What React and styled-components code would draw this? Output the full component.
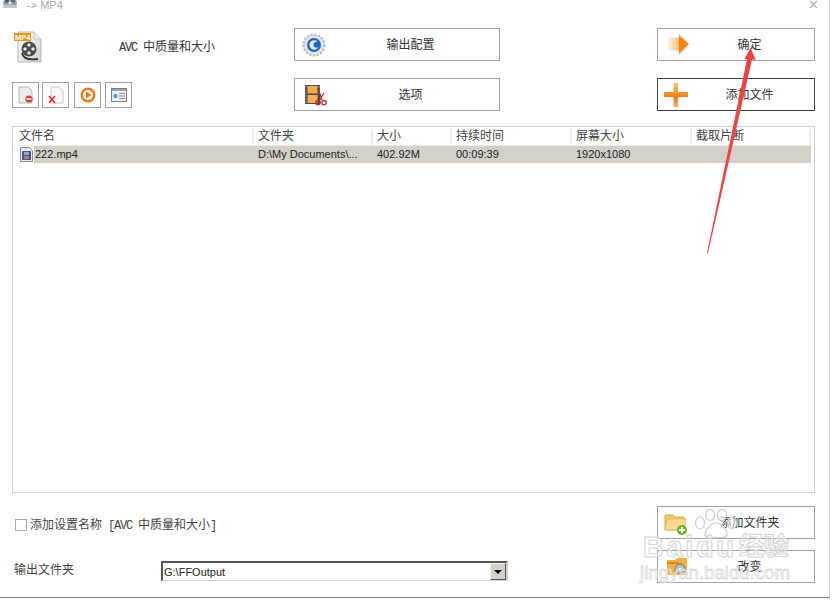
import React from "react"
import styled, { createGlobalStyle } from "styled-components"

const GlobalStyle = createGlobalStyle`
  html, body {
    margin: 0;
    background: #fff;
  }
  body {
    font-family: "Liberation Sans", "Noto Sans CJK SC", sans-serif;
    font-size: 12px;
    color: #333;
  }
`

const columns = [
  { title: "文件名", value: "222.mp4", width: 240 },
  { title: "文件夹", value: "D:\\My Documents\\...", width: 119 },
  { title: "大小", value: "402.92M", width: 79 },
  { title: "持续时间", value: "00:09:39", width: 120 },
  { title: "屏幕大小", value: "1920x1080", width: 120 },
  { title: "截取片断", value: "", width: 119 },
]

const App = () => {
  return (
    <Window>
      <GlobalStyle />
      <TitleBar>
        <TitleIcon />
        <TitleText>-&gt; MP4</TitleText>
        <CloseIcon />
      </TitleBar>

      <TopGrid>
        <Preset>
          <Mp4Icon />
          <PresetName>
            <Mono>AVC </Mono>中质量和大小
          </PresetName>
        </Preset>
        <ActionButton $width={206}>
          <IconSlot>
            <GearIcon />
          </IconSlot>
          <ButtonLabel>输出配置</ButtonLabel>
        </ActionButton>
        <ActionButton>
          <IconSlot $left={10}>
            <ArrowIcon />
          </IconSlot>
          <ButtonLabel>确定</ButtonLabel>
        </ActionButton>
        <ToolRow>
          <ToolButton $after={3}>
            <RemoveIcon />
          </ToolButton>
          <ToolButton $after={5}>
            <DeleteIcon />
          </ToolButton>
          <ToolButton $after={4}>
            <PlayIcon />
          </ToolButton>
          <ToolButton>
            <InfoIcon />
          </ToolButton>
        </ToolRow>
        <ActionButton $width={206}>
          <IconSlot $left={9}>
            <ClipIcon />
          </IconSlot>
          <ButtonLabel>选项</ButtonLabel>
        </ActionButton>
        <ActionButton $active>
          <IconSlot $left={6}>
            <PlusIcon />
          </IconSlot>
          <ButtonLabel>添加文件</ButtonLabel>
        </ActionButton>
      </TopGrid>

      <ListPanel>
        <HeaderRow>
          {columns.map((c, i) => (
            <HeaderCell key={c.title} $width={c.width} $first={i === 0}>
              {c.title}
            </HeaderCell>
          ))}
        </HeaderRow>
        <FileRow>
          {columns.map((c, i) => (
            <FileCell key={c.title} $width={c.width} $first={i === 0}>
              {i === 0 && <FilmIcon />}
              <FileText $first={i === 0}>{c.value}</FileText>
            </FileCell>
          ))}
        </FileRow>
      </ListPanel>

      <BottomRow>
        <BottomLeft>
          <CheckRow>
            <CheckBox />
            <CheckText>
              添加设置名称<Mono> [AVC </Mono>中质量和大小<Mono>]</Mono>
            </CheckText>
          </CheckRow>
          <FolderRow>
            <FolderLabel>输出文件夹</FolderLabel>
            <Combo>
              <ComboText>G:\FFOutput</ComboText>
              <ComboButton>
                <ComboArrow />
              </ComboButton>
            </Combo>
          </FolderRow>
        </BottomLeft>
        <BottomButtons>
          <ActionButton>
            <IconSlot $left={6}>
              <FolderAddIcon />
            </IconSlot>
            <ButtonLabel>添加文件夹</ButtonLabel>
          </ActionButton>
          <ActionButton>
            <IconSlot $left={8}>
              <FolderGearIcon />
            </IconSlot>
            <ButtonLabel>改变</ButtonLabel>
          </ActionButton>
        </BottomButtons>
      </BottomRow>

      <RedArrow viewBox="0 0 60 230">
        <polygon
          points="1,219 41,25 38.5,25 44.5,14 50,26 46,25.5 2,219"
          fill="#f04444"
        />
      </RedArrow>

      <Watermark>
        <PawIcon />
        <MarkBrand>Baidu</MarkBrand>
        <MarkCjk>经验</MarkCjk>
        <MarkUrl>jingyan.baidu.com</MarkUrl>
      </Watermark>
    </Window>
  )
}

export default App

const TitleIcon = () => (
  <TitleSvg viewBox="0 0 16 14">
    <ellipse cx="8" cy="7" rx="7" ry="5" fill="#9aa3ad" />
    <circle cx="5" cy="5" r="2" fill="#47607c" />
    <circle cx="11" cy="5" r="2" fill="#56708e" />
    <circle cx="8" cy="7" r="1.6" fill="#e8eaee" />
    <rect x="1" y="9" width="14" height="3" fill="#c5c9cf" />
  </TitleSvg>
)

const CloseIcon = () => (
  <CloseSvg viewBox="0 0 9 9">
    <path d="M1 1l7 7M8 1l-7 7" stroke="#b4b4b4" strokeWidth="1.4" fill="none" />
  </CloseSvg>
)

const Mp4Icon = () => (
  <svg width="28" height="32" viewBox="0 0 28 32">
    <defs>
      <linearGradient id="pageFill" x1="0" y1="0" x2="1" y2="1">
        <stop offset="0" stopColor="#ffffff" />
        <stop offset="1" stopColor="#cfcfcf" />
      </linearGradient>
    </defs>
    <path d="M4 1h16l7 7v23H4z" fill="url(#pageFill)" stroke="#b8b8b8" />
    <path d="M20 1v7h7" fill="#eee" stroke="#c4c4c4" />
    <rect x="0" y="2" width="17" height="8" fill="#ef9410" />
    <text x="1" y="9" fontFamily="Liberation Sans" fontWeight="700" fontSize="7.5" fill="#fff">
      MP4
    </text>
    <circle cx="15" cy="18" r="7.5" fill="#4a4a4a" />
    <circle cx="15" cy="14" r="1.8" fill="#e4e4e4" />
    <circle cx="11" cy="18" r="1.8" fill="#e4e4e4" />
    <circle cx="19" cy="18" r="1.8" fill="#e4e4e4" />
    <circle cx="15" cy="22" r="1.8" fill="#e4e4e4" />
    <path d="M8 22c1 6 8 7 16 6" stroke="#333" strokeWidth="1.8" fill="none" />
  </svg>
)

const GearIcon = () => (
  <svg width="24" height="24" viewBox="0 0 24 24">
    <circle cx="12" cy="12" r="10.5" fill="#e4e4e4" stroke="#bcbcbc" strokeWidth="2" strokeDasharray="2.4 1.4" />
    <circle cx="12" cy="12" r="7" fill="#1c68b8" />
    <path d="M15.5 8.5a4.8 4.8 0 1 0 1 5.5c-2 1.5-5 .5-5-2s2-3.5 4-3.5z" fill="#dcebf8" />
  </svg>
)

const ArrowIcon = () => (
  <svg width="22" height="24" viewBox="0 0 22 24">
    <defs>
      <linearGradient id="arrowFill" x1="0" y1="0" x2="1" y2="0">
        <stop offset="0" stopColor="#fff3e4" />
        <stop offset="0.55" stopColor="#fbb672" />
        <stop offset="1" stopColor="#fb7c00" />
      </linearGradient>
    </defs>
    <path d="M1 5h10V1l10 10-10 11v-5H1z" fill="url(#arrowFill)" stroke="#e8d6c4" strokeWidth="0.6" />
    <path d="M11 3l8 8-8 9z" fill="#fb7f05" />
  </svg>
)

const ClipIcon = () => (
  <svg width="24" height="22" viewBox="0 0 24 22">
    <rect x="1" y="1" width="15" height="19" fill="#4a4a46" />
    <rect x="3.5" y="2" width="10" height="7.5" fill="#f6ab4c" />
    <rect x="3.5" y="11" width="10" height="8" fill="#f8b05a" />
    <path d="M1.5 3h1M1.5 6h1M1.5 9h1M1.5 12h1M1.5 15h1M1.5 18h1M14.5 3h1M14.5 6h1M14.5 9h1" stroke="#ddd" />
    <path d="M14 4l4 12M20 9l-5 8" stroke="#9a2a2a" strokeWidth="1.2" />
    <circle cx="14" cy="18.5" r="2.2" fill="none" stroke="#c02828" strokeWidth="1.3" />
    <circle cx="20" cy="18.5" r="2.2" fill="none" stroke="#c02828" strokeWidth="1.3" />
  </svg>
)

const PlusIcon = () => (
  <svg width="24" height="24" viewBox="0 0 24 24">
    <defs>
      <linearGradient id="plusFill" x1="0" y1="0" x2="0" y2="1">
        <stop offset="0" stopColor="#fbc48c" />
        <stop offset="0.6" stopColor="#f07d0e" />
        <stop offset="1" stopColor="#fbb070" />
      </linearGradient>
    </defs>
    <path d="M9.5 0h4.5v9h10v5H14v10H9.5V14H0V9h9.5z" fill="url(#plusFill)" />
  </svg>
)

const RemoveIcon = () => (
  <svg width="16" height="18" viewBox="0 0 16 18">
    <path d="M1 1h9l4 4v12H1z" fill="#ececec" stroke="#b4b4b4" />
    <circle cx="11" cy="13" r="3.6" fill="#e23c2c" />
    <rect x="8.5" y="12.2" width="5" height="1.6" fill="#fff" />
  </svg>
)

const DeleteIcon = () => (
  <svg width="16" height="18" viewBox="0 0 16 18">
    <path d="M3 1h8l4 4v12H3z" fill="#f8f8f8" stroke="#c8c8c8" />
    <path d="M1 10l6 7M7 10l-6 7" stroke="#e2261c" strokeWidth="1.4" />
  </svg>
)

const PlayIcon = () => (
  <svg width="16" height="16" viewBox="0 0 16 16">
    <circle cx="8" cy="8" r="7.5" fill="#ee7a10" />
    <circle cx="8" cy="8" r="5" fill="#fff" />
    <path d="M6 4.5l5.5 3.5L6 11.5z" fill="#ee7a10" />
  </svg>
)

const InfoIcon = () => (
  <svg width="16" height="14" viewBox="0 0 16 14">
    <rect x="0.5" y="0.5" width="15" height="13" fill="#eef2f6" stroke="#78808c" />
    <rect x="1" y="1" width="14" height="2" fill="#9aa4b0" />
    <circle cx="4.5" cy="8" r="2.2" fill="#4ea4ec" />
    <path d="M8 5.5h6M8 8h6M8 10.5h6" stroke="#8a94a0" />
  </svg>
)

const FilmIcon = () => (
  <FilmSvg viewBox="0 0 13 15">
    <path d="M0.5 0.5h9l3 3v11h-12z" fill="#ececec" stroke="#808890" />
    <rect x="2" y="4" width="9" height="9" fill="#3e5c84" />
    <rect x="4" y="5" width="5" height="3" fill="#78b4ec" />
    <rect x="4" y="9" width="5" height="3" fill="#d8687a" />
  </FilmSvg>
)

const FolderAddIcon = () => (
  <svg width="24" height="26" viewBox="0 0 24 26">
    <path d="M1 5h8l2 2h9v13H1z" fill="#f2c868" stroke="#d8ac50" />
    <path d="M3 9h19l-2 11H1z" fill="#fbdc92" stroke="#e4bc64" />
    <circle cx="18" cy="20" r="5" fill="#6cb01e" />
    <path d="M15 20h6M18 17v6" stroke="#fff" strokeWidth="1.8" />
  </svg>
)

const FolderGearIcon = () => (
  <svg width="22" height="20" viewBox="0 0 22 20">
    <path d="M1 3h8l2-2h10v17H1z" fill="#f2b43c" />
    <rect x="1" y="5" width="12" height="2" fill="#d8862a" />
    <circle cx="14" cy="12" r="5" fill="#b8bcc0" stroke="#70747a" />
    <circle cx="14" cy="12" r="1.6" fill="#fff" />
  </svg>
)

const PawIcon = () => (
  <PawSvg viewBox="0 0 44 30">
    <g fill="#fff" fillOpacity="0.5" stroke="#cccccc" strokeWidth="1.2">
      <ellipse cx="6" cy="14" rx="4.5" ry="6" />
      <ellipse cx="16" cy="6" rx="4.5" ry="5.5" />
      <ellipse cx="28" cy="6" rx="4.5" ry="5.5" />
      <ellipse cx="38" cy="14" rx="4.5" ry="6" />
      <path d="M22 14c-5 0-11 7-11 11s4 4 11 3c7 1 11 1 11-3s-6-11-11-11z" />
    </g>
  </PawSvg>
)

const Window = styled.div`
  position: relative;
  box-sizing: border-box;
  width: 830px;
  height: 598px;
  padding: 0 14px 0 12px;
  border-right: 1px solid #c8c8c8;
  border-bottom: 1px solid #808080;
  overflow: hidden;
`

const TitleBar = styled.div`
  display: flex;
  align-items: flex-start;
  height: 28px;
  margin: 0 0 0 -10px;
`

const TitleSvg = styled.svg`
  width: 16px;
  height: 14px;
  margin-top: -4px;
`

const TitleText = styled.span`
  margin-left: 9px;
  font-size: 11px;
  line-height: 10px;
  color: #a8a8a8;
`

const CloseSvg = styled.svg`
  width: 9px;
  height: 9px;
  margin-left: auto;
  margin-right: -3px;
`

const TopGrid = styled.div`
  display: grid;
  grid-template-columns: 282px 363px 158px;
  grid-template-rows: 33px 33px;
  row-gap: 17px;
  margin-bottom: 15px;
`

const Preset = styled.div`
  display: flex;
  align-items: flex-start;
  padding: 3px 0 0 2px;
`

const PresetName = styled.div`
  margin: 8px 0 0 77px;
  font-size: 12px;
  line-height: 16px;
  white-space: nowrap;
`

const Mono = styled.span`
  font-family: "Liberation Mono", monospace;
  font-size: 12px;
  letter-spacing: -1.2px;
`

const ToolRow = styled.div`
  display: flex;
  padding-top: 4px;
`

const ToolButton = styled.div`
  box-sizing: border-box;
  display: flex;
  align-items: center;
  justify-content: center;
  width: 27px;
  height: 26px;
  margin-right: ${props => props.$after || 0}px;
  border: 1px solid #a0a0a0;
`

const ActionButton = styled.div`
  box-sizing: border-box;
  display: flex;
  align-items: center;
  width: ${props => (props.$width ? `${props.$width}px` : "auto")};
  height: 33px;
  border: 1px solid ${props => (props.$active ? "#404040" : "#a0a0a0")};
  background: #fff;
`

const IconSlot = styled.div`
  box-sizing: border-box;
  display: flex;
  align-items: center;
  flex: 0 0 27px;
  min-width: 0;
  height: 100%;
  padding-left: ${props => props.$left || 7}px;
  overflow: visible;

  svg {
    flex-shrink: 0;
  }
`

const ButtonLabel = styled.div`
  flex: 1;
  padding-bottom: 3px;
  text-align: center;
  font-size: 12px;
  color: #333;
  white-space: nowrap;
`

const ListPanel = styled.div`
  box-sizing: border-box;
  height: 367px;
  padding: 2px 3px 0 1px;
  border: 1px solid #d0d0d0;
`

const HeaderRow = styled.div`
  display: flex;
  height: 16px;
  border-bottom: 1px solid #ececec;
`

const HeaderCell = styled.div`
  box-sizing: border-box;
  width: ${props => props.$width}px;
  padding-left: ${props => (props.$first ? 5 : 4)}px;
  border-right: 2px solid #ececec;
  font-size: 12px;
  line-height: 15px;
  color: #444;
`

const FileRow = styled.div`
  display: flex;
  height: 17px;
  align-items: center;
  background: linear-gradient(to right, #fff 20px, #d4d0c8 20px);
`

const FileCell = styled.div`
  box-sizing: border-box;
  display: flex;
  align-items: center;
  width: ${props => props.$width}px;
  padding-left: ${props => (props.$first ? 6 : 4)}px;
`

const FilmSvg = styled.svg`
  width: 13px;
  height: 15px;
`

const FileText = styled.span`
  margin-left: ${props => (props.$first ? 2 : 0)}px;
  padding-bottom: 1px;
  font-size: 11px;
  line-height: 14px;
  color: #222;
  white-space: nowrap;
`

const BottomRow = styled.div`
  display: flex;
  justify-content: space-between;
  margin-top: 13px;
`

const BottomLeft = styled.div`
  display: flex;
  flex-direction: column;
  padding-top: 12px;
`

const CheckRow = styled.div`
  display: flex;
  align-items: center;
  gap: 3px;
  height: 14px;
  padding-left: 3px;
  color: #444;
`

const CheckText = styled.span`
  line-height: 12px;
  white-space: nowrap;
`

const CheckBox = styled.div`
  box-sizing: border-box;
  width: 12px;
  height: 12px;
  border: 1px solid #a8a8a8;
`

const FolderRow = styled.div`
  display: flex;
  align-items: flex-start;
  margin-top: 29px;
  padding-left: 2px;
`

const FolderLabel = styled.div`
  width: 147px;
  line-height: 19px;
  color: #444;
`

const Combo = styled.div`
  box-sizing: border-box;
  display: flex;
  align-items: center;
  justify-content: space-between;
  width: 347px;
  height: 20px;
  padding-left: 1px;
  border-top: 2px solid #555;
  border-left: 2px solid #555;
  border-right: 2px solid #d8d4cc;
  border-bottom: 1px solid #d4d0c8;
`

const ComboText = styled.span`
  font-size: 11px;
  color: #222;
`

const ComboButton = styled.div`
  box-sizing: border-box;
  display: flex;
  align-items: center;
  justify-content: center;
  width: 16px;
  height: 17px;
  background: #d4d0c8;
  border: 1px solid;
  border-color: #f4f2ee #555 #555 #f4f2ee;
`

const ComboArrow = styled.div`
  width: 0;
  height: 0;
  border-left: 4px solid transparent;
  border-right: 4px solid transparent;
  border-top: 4px solid #000;
`

const BottomButtons = styled.div`
  display: grid;
  grid-template-columns: 158px;
  row-gap: 11px;
`

const RedArrow = styled.svg`
  position: absolute;
  left: 706px;
  top: 34px;
  width: 60px;
  height: 230px;
  pointer-events: none;
`

const Watermark = styled.div`
  position: absolute;
  left: 640px;
  top: 509px;
  width: 155px;
  height: 76px;
  pointer-events: none;
  font-family: "Liberation Sans", "Noto Sans CJK SC", sans-serif;
`

const PawSvg = styled.svg`
  position: absolute;
  left: 54px;
  top: 0;
  width: 44px;
  height: 30px;
`

const markText = `
  color: rgba(255, 255, 255, 0.45);
  white-space: nowrap;
`

const MarkBrand = styled.div`
  ${markText}
  position: absolute;
  left: 3px;
  top: 23px;
  font-size: 29px;
  line-height: 30px;
  font-weight: 700;
  letter-spacing: 2.6px;
  -webkit-text-stroke: 1px #d4d4d4;
`

const MarkCjk = styled.div`
  ${markText}
  position: absolute;
  left: 99px;
  top: 22px;
  font-size: 25px;
  line-height: 30px;
  font-weight: 700;
  -webkit-text-stroke: 1px #d4d4d4;
`

const MarkUrl = styled.div`
  ${markText}
  position: absolute;
  left: 0;
  top: 52px;
  font-size: 18.6px;
  line-height: 24px;
  -webkit-text-stroke: 0.8px #d8d8d8;
`
